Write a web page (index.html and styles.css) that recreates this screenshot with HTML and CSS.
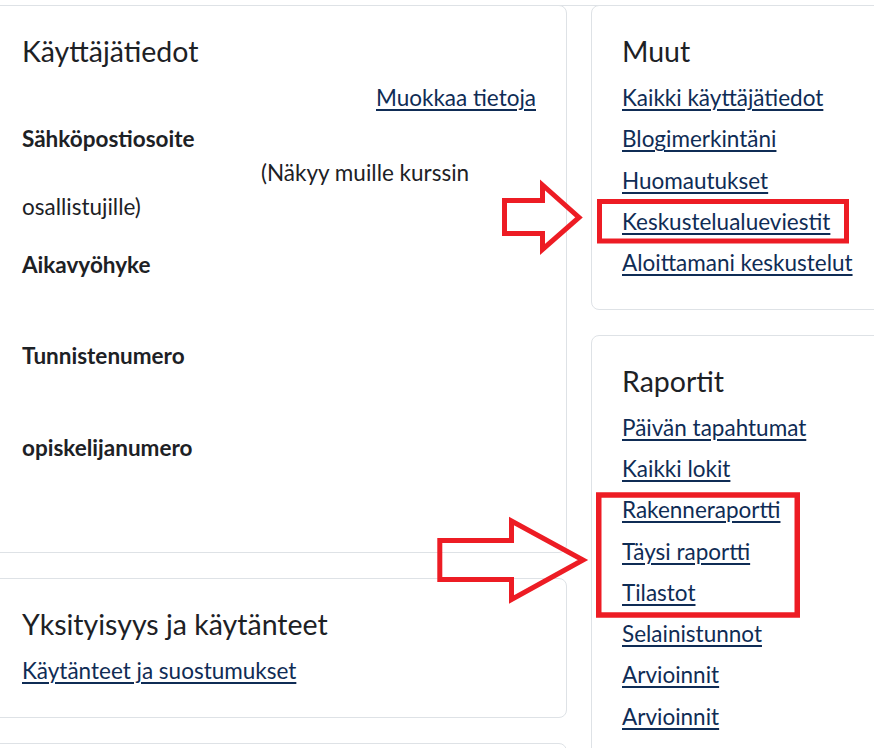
FILE: index.html
```html
<!DOCTYPE html>
<html lang="fi">
<head>
<meta charset="utf-8">
<title>Profiili</title>
<link rel="stylesheet" href="styles.css">
</head>
<body>
<div class="rule"></div>
<div class="page">
  <div class="col">
    <section class="card card-user">
      <h3 class="card-title">Käyttäjätiedot</h3>
      <div class="edit"><a href="#">Muokkaa tietoja</a></div>
      <dl class="fields">
        <div class="field">
          <dt>Sähköpostiosoite</dt>
          <dd class="email">(Näkyy muille kurssin osallistujille)</dd>
        </div>
        <div class="field">
          <dt>Aikavyöhyke</dt>
          <dd class="empty"></dd>
        </div>
        <div class="field">
          <dt>Tunnistenumero</dt>
          <dd class="empty"></dd>
        </div>
        <div class="field">
          <dt>opiskelijanumero</dt>
          <dd class="empty"></dd>
        </div>
      </dl>
    </section>
    <section class="card">
      <h3 class="card-title">Yksityisyys ja käytänteet</h3>
      <ul class="links">
        <li><a href="#">Käytänteet ja suostumukset</a></li>
      </ul>
    </section>
    <section class="card card-stub"></section>
  </div>
  <div class="col">
    <section class="card">
      <h3 class="card-title">Muut</h3>
      <ul class="links">
        <li><a href="#">Kaikki käyttäjätiedot</a></li>
        <li><a href="#">Blogimerkintäni</a></li>
        <li><a href="#">Huomautukset</a></li>
        <li><a href="#">Keskustelualueviestit</a></li>
        <li><a href="#">Aloittamani keskustelut</a></li>
      </ul>
    </section>
    <section class="card">
      <h3 class="card-title">Raportit</h3>
      <ul class="links">
        <li><a href="#">Päivän tapahtumat</a></li>
        <li><a href="#">Kaikki lokit</a></li>
        <li><a href="#">Rakenneraportti</a></li>
        <li><a href="#">Täysi raportti</a></li>
        <li><a href="#">Tilastot</a></li>
        <li><a href="#">Selainistunnot</a></li>
        <li><a href="#">Arvioinnit</a></li>
        <li><a href="#">Arvioinnit</a></li>
      </ul>
    </section>
  </div>
</div>
<svg class="annot" width="874" height="748" viewBox="0 0 874 748" aria-hidden="true">
  <g fill="none" stroke="#ED1C24" stroke-width="5" stroke-linejoin="miter" stroke-miterlimit="10">
    <rect x="599.5" y="201.5" width="247" height="39.5"/>
    <rect x="598.75" y="495" width="198.5" height="120" stroke-width="5.5"/>
    <path d="M504.5 200.5 L542.5 200.5 L542.5 185 L579 217.5 L542.5 249.5 L542.5 233.5 L504.5 233.5 Z"/>
    <path d="M439.8 540.5 L511.5 540.5 L511.5 521 L583 560 L511.5 599.5 L511.5 579.5 L439.8 579.5 Z"/>
  </g>
</svg>
</body>
</html>
```

FILE: styles.css
```css
html, body {
  margin: 0;
  padding: 0;
}

body {
  width: 874px;
  height: 748px;
  overflow: hidden;
  position: relative;
  background: #ffffff;
  font-family: Lato, "Open Sans", "Liberation Sans", sans-serif;
  font-size: 22.5px;
  line-height: 33.75px;
  color: #1d2125;
}

.rule {
  height: 6px;
  box-sizing: border-box;
  border-bottom: 1px solid #dee2e6;
}

.page {
  display: flex;
  gap: 24px;
  margin-left: -9px;
  margin-top: -1px;
}

.col {
  width: 576px;
  flex: none;
  display: flex;
  flex-direction: column;
  gap: 25px;
}

.card {
  border: 1px solid #dee2e6;
  border-radius: 8px;
  background: #ffffff;
  padding: 28px 30px 21.5px 30px;
}

.card-user {
  padding-bottom: 29.5px;
}

.card-title {
  margin: 0 0 13px 0;
  font-size: 28.5px;
  line-height: 34px;
  font-weight: 400;
  color: #1d2125;
}

a {
  color: #0f2c55;
  text-decoration: underline;
  text-decoration-thickness: 2px;
  text-underline-offset: 3px;
}

.edit {
  text-align: right;
  margin-bottom: 7.5px;
}

.fields {
  margin: 0;
}

.field {
  margin-bottom: 24px;
}

.field dt {
  font-weight: 700;
}

.field dd {
  margin: 0;
}

.field .email {
  text-indent: 239px;
}

.field .empty {
  height: 34px;
}

.links {
  list-style: none;
  margin: 0;
  padding: 0;
}

.links li {
  margin-bottom: 7.5px;
}

.card-stub {
  height: 60px;
}

.annot {
  position: absolute;
  left: 0;
  top: 0;
  pointer-events: none;
}
```
